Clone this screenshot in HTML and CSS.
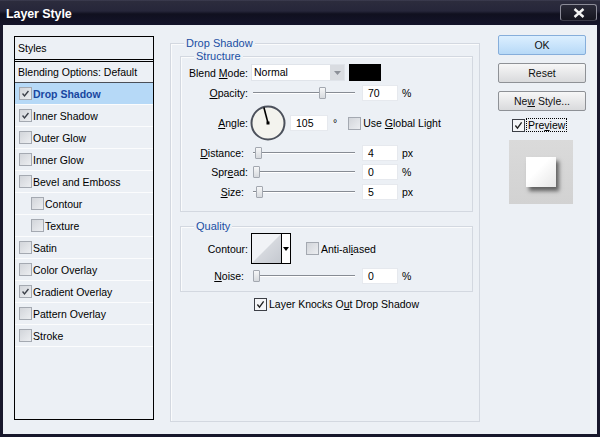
FILE: index.html
```html
<!DOCTYPE html>
<html lang="en">
<head>
  <meta charset="UTF-8">
  <title>Layer Style</title>
  <link rel="stylesheet" href="styles.css">
</head>
<body>
  <div class="window">
    <!-- Title bar -->
    <div class="titlebar">
      <span class="title">Layer Style</span>
      <span class="close">
        <svg width="12" height="10" viewBox="0 0 12 10"><path d="M1.5 1 L10.5 9 M10.5 1 L1.5 9" stroke="#f2f2f2" stroke-width="2.4" fill="none"/></svg>
      </span>
    </div>

    <div class="content">
      <!-- Styles list -->
      <div class="styles-list">
        <div class="list-head">Styles</div>
        <div class="list-blend">Blending Options: Default</div>
        <div class="item active"><span class="cb checked"><svg viewBox="0 0 13 13"><path d="M3 6.5 L5.3 9.3 L10 3.5" stroke="#3a3f48" stroke-width="1.6" fill="none"/></svg></span>Drop Shadow</div>
        <div class="item"><span class="cb checked"><svg viewBox="0 0 13 13"><path d="M3 6.5 L5.3 9.3 L10 3.5" stroke="#3a3f48" stroke-width="1.6" fill="none"/></svg></span>Inner Shadow</div>
        <div class="item"><span class="cb"></span>Outer Glow</div>
        <div class="item"><span class="cb"></span>Inner Glow</div>
        <div class="item"><span class="cb"></span>Bevel and Emboss</div>
        <div class="item sub"><span class="cb"></span>Contour</div>
        <div class="item sub"><span class="cb"></span>Texture</div>
        <div class="item"><span class="cb"></span>Satin</div>
        <div class="item"><span class="cb"></span>Color Overlay</div>
        <div class="item"><span class="cb checked"><svg viewBox="0 0 13 13"><path d="M3 6.5 L5.3 9.3 L10 3.5" stroke="#3a3f48" stroke-width="1.6" fill="none"/></svg></span>Gradient Overlay</div>
        <div class="item"><span class="cb"></span>Pattern Overlay</div>
        <div class="item"><span class="cb"></span>Stroke</div>
      </div>

      <!-- Drop Shadow settings -->
      <div class="group middle">
        <div class="legend">Drop Shadow</div>

        <div class="group structure">
          <div class="legend">Structure</div>

          <div class="row r-blend">
            <span class="lbl">Blend <u>M</u>ode:</span>
            <span class="select"><span class="sel-text">Normal</span><span class="sel-arrow"><svg width="7" height="4" viewBox="0 0 7 4"><path d="M0 0 H7 L3.5 4 Z" fill="#8c9098"/></svg></span></span>
            <span class="swatch"></span>
          </div>

          <div class="row r-gap4">
            <span class="lbl"><u>O</u>pacity:</span>
            <span class="slider"><span class="track"></span><span class="thumb" style="left: 66px"></span></span>
            <span class="num">70</span>
            <span class="unit">%</span>
          </div>

          <div class="row r-angle">
            <span class="lbl"><u>A</u>ngle:</span>
            <span class="dial">
              <svg width="36" height="36" viewBox="0 0 36 36">
                <circle cx="18" cy="18" r="16.5" fill="#f3f3ee" stroke="#4c515c" stroke-width="2"/>
                <path d="M18 18 L13.9 2.5" stroke="#000" stroke-width="1.6"/>
                <rect x="16.5" y="16.5" width="3" height="3" fill="#000"/>
              </svg>
            </span>
            <span class="num wide">105</span>
            <span class="unit deg">°</span>
            <span class="cb global"></span>
            <span class="cb-text">Use <u>G</u>lobal Light</span>
          </div>

          <div class="row r-gap4">
            <span class="lbl short"><u>D</u>istance:</span>
            <span class="slider"><span class="track"></span><span class="thumb" style="left: 2px"></span></span>
            <span class="num">4</span>
            <span class="unit">px</span>
          </div>

          <div class="row r-gap3">
            <span class="lbl">Spr<u>e</u>ad:</span>
            <span class="slider"><span class="track"></span><span class="thumb" style="left: 0px"></span></span>
            <span class="num">0</span>
            <span class="unit">%</span>
          </div>

          <div class="row r-gap4">
            <span class="lbl short"><u>S</u>ize:</span>
            <span class="slider"><span class="track"></span><span class="thumb" style="left: 3px"></span></span>
            <span class="num">5</span>
            <span class="unit">px</span>
          </div>
        </div>

        <div class="group quality">
          <div class="legend">Quality</div>

          <div class="row r-contour">
            <span class="lbl">Contour:</span>
            <span class="contour">
              <span class="curve"><svg width="29" height="29" viewBox="0 0 29 29"><defs><linearGradient id="cg" x1="0" y1="0" x2="1" y2="1"><stop offset="0" stop-color="#e8eaee"/><stop offset="1" stop-color="#c4c8cf"/></linearGradient></defs><rect width="29" height="29" fill="#f1f3f6"/><path d="M0 29 L29 0 V29 Z" fill="url(#cg)"/></svg></span>
              <span class="ct-arrow"><svg width="6" height="4" viewBox="0 0 6 4"><path d="M0 0 H6 L3 4 Z" fill="#000"/></svg></span>
            </span>
            <span class="cb anti"></span>
            <span class="cb-text">Anti-al<u>i</u>ased</span>
          </div>

          <div class="row r-gap4">
            <span class="lbl short"><u>N</u>oise:</span>
            <span class="slider"><span class="track"></span><span class="thumb" style="left: 0px"></span></span>
            <span class="num">0</span>
            <span class="unit">%</span>
          </div>
        </div>

        <div class="row knock">
          <span class="cb checked dark"><svg viewBox="0 0 13 13"><path d="M2.8 6.5 L5.3 9.6 L10.2 2.8" stroke="#222" stroke-width="1.6" fill="none"/></svg></span>
          <span class="cb-text">Layer Knocks O<u>u</u>t Drop Shadow</span>
        </div>
      </div>

      <!-- Buttons and preview -->
      <div class="side">
        <div class="btn ok">OK</div>
        <div class="btn">Reset</div>
        <div class="btn">Ne<u>w</u> Style...</div>
        <div class="preview-row">
          <span class="cb checked dark"><svg viewBox="0 0 13 13"><path d="M2.8 6.5 L5.3 9.6 L10.2 2.8" stroke="#222" stroke-width="1.6" fill="none"/></svg></span>
          <span class="focus">Pre<u>v</u>iew</span>
        </div>
        <div class="thumbnail"><div class="thumb-square"></div></div>
      </div>
    </div>
  </div>
</body>
</html>
```

FILE: styles.css
```css
body {
  margin: 0;
  padding: 0;
  font-family: "Liberation Sans", Arial, sans-serif;
  font-size: 10.5px;
  color: #000;
}

u {
  text-decoration: underline;
  text-underline-offset: 1px;
}

.window {
  width: 600px;
  height: 437px;
  background-color: #17172b;
  display: flex;
  flex-direction: column;
}

/* Title bar */
.titlebar {
  height: 25px;
  flex: none;
  display: flex;
  align-items: center;
  justify-content: space-between;
  padding: 0 3px 0 6px;
  background: linear-gradient(#45455a 0, #2c2c3d 1px, #26263a 11px, #10101f 14px, #14142a 100%);
}

.title {
  color: #fff;
  font-weight: bold;
  font-size: 12.5px;
  letter-spacing: -0.1px;
  margin-top: 2px;
}

.close {
  width: 35px;
  height: 15px;
  display: flex;
  align-items: center;
  justify-content: center;
  background: linear-gradient(#2a2a38, #15151f);
  border: 1px solid #8c8c98;
  border-bottom-color: #3a3a48;
  border-radius: 3px;
}

.content {
  flex: 1;
  margin: 0 3px 3px;
  background-color: #ecf0f5;
  display: flex;
  align-items: flex-start;
}

/* Checkboxes */
.cb {
  width: 13px;
  height: 13px;
  box-sizing: border-box;
  flex: none;
  border: 1px solid #a4a9b1;
  background: linear-gradient(135deg, #d2d5da, #eceef1);
  display: inline-flex;
}

.cb svg {
  width: 11px;
  height: 11px;
}

.cb.dark {
  border-color: #3c3f46;
  background: #f4f5f7;
}

.cb-text {
  margin-left: 2px;
  white-space: nowrap;
}

/* Styles list */
.styles-list {
  margin: 11px 0 0 11px;
  width: 140px;
  height: 384px;
  box-sizing: border-box;
  border: 1px solid #000;
  flex: none;
}

.list-head {
  height: 22px;
  line-height: 22px;
  padding-left: 3px;
  border-bottom: 3px double #000;
}

.list-blend {
  height: 20px;
  line-height: 20px;
  padding-left: 3px;
  border-bottom: 1px solid #4a4f58;
}

.item {
  height: 21px;
  border-bottom: 1px solid #fbfcfd;
  display: flex;
  align-items: center;
  padding-left: 4px;
  gap: 1px;
  white-space: nowrap;
}

.item.sub {
  padding-left: 16px;
}

.item.active {
  background-color: #b6d9f7;
  color: #1846a0;
  font-weight: bold;
}

/* Group boxes */
.group {
  display: flex;
  flex-direction: column;
  border: 1px solid #d3d8e0;
  box-shadow: inset 1px 1px 0 #fafbfc;
  box-sizing: border-box;
}

.legend {
  align-self: flex-start;
  margin: -7px 0 0 13px;
  padding: 0 2px;
  line-height: 13px;
  background-color: #ecf0f5;
  color: #1b4fa3;
  font-size: 11px;
}

.middle {
  margin: 18px 0 0 16px;
  width: 310px;
  height: 379px;
  flex: none;
}

.structure {
  margin: 6px 6px 0 9px;
  padding-bottom: 11px;
}

.quality {
  margin: 14px 6px 0 9px;
  padding-bottom: 7px;
}

/* Rows */
.row {
  display: flex;
  align-items: center;
  height: 16px;
  white-space: nowrap;
}

.r-blend {
  margin-top: 1px;
  height: 17px;
}

.r-gap4 {
  margin-top: 4px;
}

.r-gap3 {
  margin-top: 3px;
}

.r-angle {
  margin-top: 4px;
  height: 36px;
}

.r-contour {
  height: 31px;
}

.lbl {
  width: 67px;
  flex: none;
  text-align: right;
  box-sizing: border-box;
}

.lbl.short {
  padding-right: 4px;
}

.select {
  margin-left: 3px;
  width: 94px;
  height: 17px;
  box-sizing: border-box;
  display: flex;
  background-color: #fff;
  border: 1px solid #e0e4ea;
}

.sel-text {
  flex: 1;
  padding-left: 2px;
  line-height: 15px;
}

.sel-arrow {
  width: 14px;
  display: flex;
  align-items: center;
  justify-content: center;
  background-color: #d9dce1;
}

.swatch {
  margin-left: 4px;
  width: 32px;
  height: 17px;
  background-color: #000;
}

.slider {
  margin-left: 5px;
  width: 102px;
  height: 16px;
  position: relative;
  flex: none;
}

.track {
  display: block;
  margin-top: 7px;
  height: 1px;
  background-color: #878c94;
  border-bottom: 1px solid #fff;
}

.thumb {
  position: absolute;
  top: 2px;
  width: 7px;
  height: 12px;
  box-sizing: border-box;
  border: 1px solid #a3a8b0;
  border-radius: 1px;
  background: linear-gradient(#f6f7f8, #d7dade);
}

.num {
  margin-left: 7px;
  width: 36px;
  height: 16px;
  box-sizing: border-box;
  flex: none;
  background-color: #fff;
  border: 1px solid #e6e9ee;
  padding-left: 5px;
  line-height: 15px;
}

.num.wide {
  margin-left: 4px;
  width: 38px;
}

.unit {
  margin-left: 4px;
}

.unit.deg {
  margin-left: 5px;
}

.dial {
  margin-left: 2px;
  width: 36px;
  height: 36px;
  display: flex;
}

.global {
  margin-left: 11px;
}

.contour {
  margin-left: 3px;
  width: 40px;
  height: 31px;
  box-sizing: border-box;
  border: 1px solid #000;
  display: flex;
  background-color: #f1f3f6;
}

.curve {
  width: 29px;
  display: flex;
}

.ct-arrow {
  flex: 1;
  border-left: 1px solid #000;
  display: flex;
  align-items: center;
  justify-content: center;
  background-color: #fff;
}

.anti {
  margin-left: 15px;
}

.knock {
  margin: 5px 0 0 83px;
  height: 14px;
}

/* Side column */
.side {
  margin: 10px 0 0 18px;
  width: 88px;
  flex: none;
  display: flex;
  flex-direction: column;
}

.btn {
  height: 20px;
  box-sizing: border-box;
  margin-bottom: 8px;
  border: 1px solid #8e9196;
  border-radius: 2px;
  background: linear-gradient(#f7f7f7, #d9dadc);
  text-align: center;
  line-height: 18px;
  color: #111;
}

.btn.ok {
  border-color: #86aedb;
  background: linear-gradient(#dcefff, #b7d9f7);
}

.preview-row {
  display: flex;
  align-items: center;
  margin: -1px 0 0 14px;
  height: 14px;
}

.focus {
  margin-left: 1px;
  padding: 0 1px;
  border: 1px dotted #000;
  line-height: 12px;
}

.thumbnail {
  margin: 8px 0 0 11px;
  width: 64px;
  height: 64px;
  background: linear-gradient(#dadada, #d2d2d2);
  display: flex;
  align-items: center;
  justify-content: center;
}

.thumb-square {
  width: 30px;
  height: 30px;
  background: linear-gradient(135deg, #ffffff 40%, #e6e6e6);
  box-shadow: 3px 4px 4px rgba(0, 0, 0, 0.55);
}
```
